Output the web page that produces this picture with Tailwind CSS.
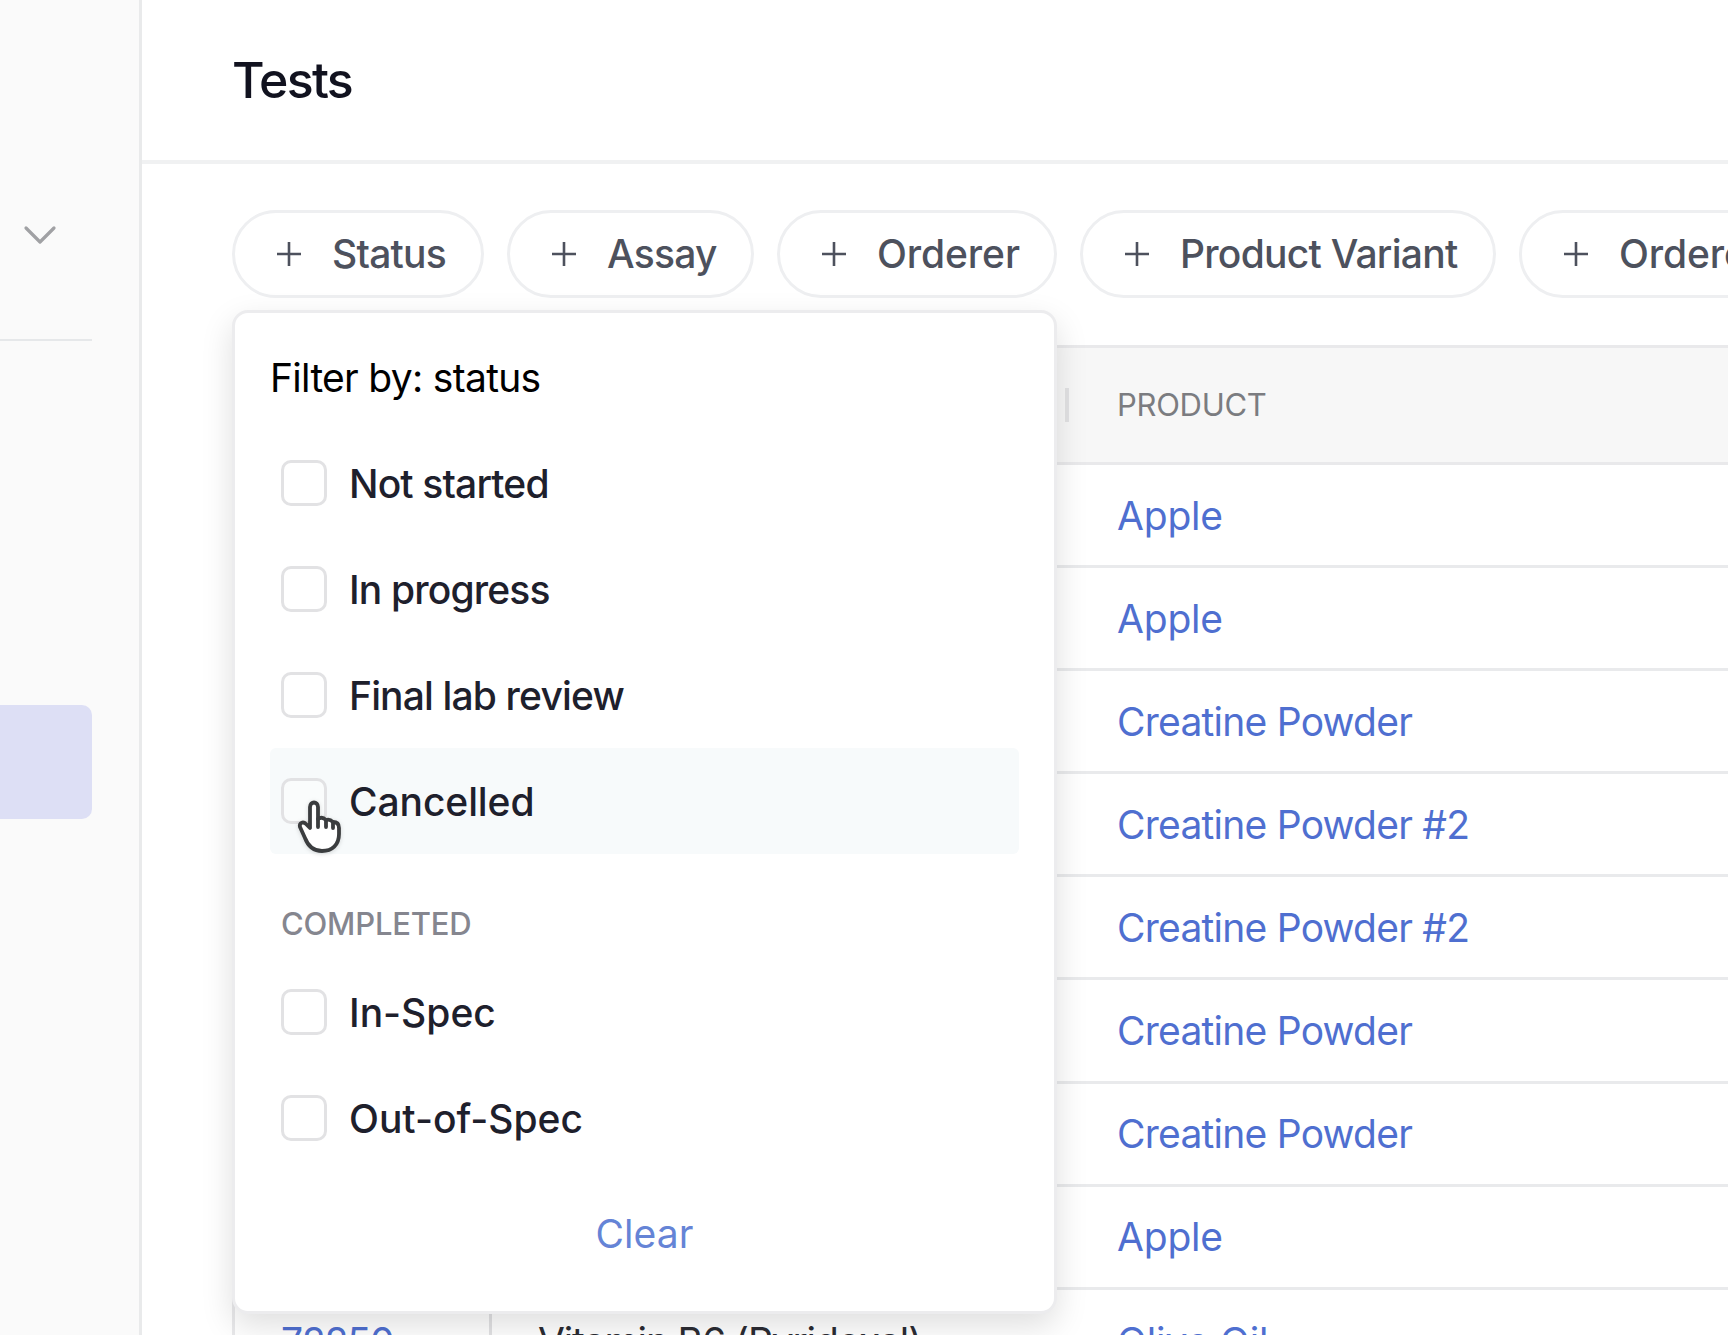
<!DOCTYPE html>
<html lang="en">
<head>
  <meta charset="UTF-8" />
  <meta name="viewport" content="width=device-width, initial-scale=1.0"/>
  <title>Tests</title>
  <script src="https://cdn.jsdelivr.net/npm/@tailwindcss/browser@4"></script>
</head>
<body class="bg-white font-['Inter','Liberation_Sans',sans-serif]">
  <div class="flex w-[1728px] h-[1335px] overflow-hidden">

    <!-- Sidebar -->
    <aside class="w-[142px] shrink-0 bg-[#fafafa] border-r-[3px] border-[#e9eaeb]">
      <div class="h-[341px] w-[92px] border-b-2 border-[#e6e8ea] pt-[225px] pl-[23px]">
        <svg class="w-[34px] h-[20px]" viewBox="0 0 34 20" fill="none" stroke="#a0a1a4" stroke-width="3.2" stroke-linecap="round" stroke-linejoin="round">
          <path d="M3 3l14 14L31 3"/>
        </svg>
      </div>
      <div class="mt-[364px] w-[92px] h-[114px] rounded-r-[10px] bg-[#dddff5]"></div>
    </aside>

    <main class="flex-1 min-w-0">
      <header class="h-[164px] border-b-4 border-[#f0f1f2] pl-[90px] flex items-center">
        <h1 class="text-[50px] leading-none font-medium tracking-[-1.7px] text-[#11121f]">Tests</h1>
      </header>

      <!-- Filter pills -->
      <div class="relative pl-[90px] pt-[46px] h-[181px]">
        <div class="flex gap-[23px] text-[39px] font-medium tracking-[-0.75px] text-[#4d515d] whitespace-nowrap">
          <button class="w-[252px] h-[88px] shrink-0 rounded-full border-[3px] border-[#eeeff1] flex items-center pl-[41px]">
            <svg class="w-[26px] h-[26px] mr-[30px] shrink-0" viewBox="0 0 26 26" stroke="#4d515d" stroke-width="2.6"><path d="M1 13h24M13 1v24"/></svg>
            <span>Status</span>
          </button>
          <button class="w-[247px] h-[88px] shrink-0 rounded-full border-[3px] border-[#eeeff1] flex items-center pl-[41px]">
            <svg class="w-[26px] h-[26px] mr-[30px] shrink-0" viewBox="0 0 26 26" stroke="#4d515d" stroke-width="2.6"><path d="M1 13h24M13 1v24"/></svg>
            <span>Assay</span>
          </button>
          <button class="w-[280px] h-[88px] shrink-0 rounded-full border-[3px] border-[#eeeff1] flex items-center pl-[41px]">
            <svg class="w-[26px] h-[26px] mr-[30px] shrink-0" viewBox="0 0 26 26" stroke="#4d515d" stroke-width="2.6"><path d="M1 13h24M13 1v24"/></svg>
            <span class="tracking-[-0.1px]">Orderer</span>
          </button>
          <button class="w-[416px] h-[88px] shrink-0 rounded-full border-[3px] border-[#eeeff1] flex items-center pl-[41px]">
            <svg class="w-[26px] h-[26px] mr-[30px] shrink-0" viewBox="0 0 26 26" stroke="#4d515d" stroke-width="2.6"><path d="M1 13h24M13 1v24"/></svg>
            <span>Product Variant</span>
          </button>
          <button class="w-[320px] h-[88px] shrink-0 rounded-full border-[3px] border-[#eeeff1] flex items-center pl-[41px]">
            <svg class="w-[26px] h-[26px] mr-[30px] shrink-0" viewBox="0 0 26 26" stroke="#4d515d" stroke-width="2.6"><path d="M1 13h24M13 1v24"/></svg>
            <span class="tracking-[-0.1px]">Ordered</span>
          </button>
        </div>

        <!-- Status dropdown -->
        <div class="absolute z-10 left-[90px] top-[146px] w-[825px] h-[1004px] rounded-[16px] border-[3px] border-[#ececee] bg-white shadow-[0_12px_32px_rgba(0,0,0,0.13)] px-[35px] pt-[34px] text-[39px] leading-none text-[#1e202c] tracking-[-0.85px]">
          <h2 class="h-[66px] pt-[11px] text-black tracking-[-0.7px]">Filter by: status</h2>
          <div class="mt-[17px] font-[450]">
            <label class="h-[106px] flex items-center pl-[11px] gap-[22px]"><span class="size-[46px] rounded-[10px] border-[3px] border-[#e2e2e4] bg-white"></span><span>Not started</span></label>
            <label class="h-[106px] flex items-center pl-[11px] gap-[22px]"><span class="size-[46px] rounded-[10px] border-[3px] border-[#e2e2e4] bg-white"></span><span>In progress</span></label>
            <label class="h-[106px] flex items-center pl-[11px] gap-[22px]"><span class="size-[46px] rounded-[10px] border-[3px] border-[#e2e2e4] bg-white"></span><span>Final lab review</span></label>
            <label class="h-[106px] flex items-center pl-[11px] gap-[22px] rounded-[6px] bg-[#f7fafb]"><span class="size-[46px] rounded-[10px] border-[3px] border-[#e2e2e4] bg-[#fafcfc]"></span><span class="tracking-[-0.1px]">Cancelled</span></label>
          </div>
          <h3 class="mt-[51px] h-[36px] flex items-center pl-[11px] text-[31px] font-medium tracking-[-0.2px] text-[#85868f]">COMPLETED</h3>
          <div class="mt-[18px] font-[450] tracking-[0px]">
            <label class="h-[106px] flex items-center pl-[11px] gap-[22px]"><span class="size-[46px] rounded-[10px] border-[3px] border-[#e2e2e4] bg-white"></span><span>In-Spec</span></label>
            <label class="h-[106px] flex items-center pl-[11px] gap-[22px]"><span class="size-[46px] rounded-[10px] border-[3px] border-[#e2e2e4] bg-white"></span><span>Out-of-Spec</span></label>
          </div>
          <button class="mt-[43px] w-full text-center text-[#6584d6] tracking-[0.1px]">Clear</button>
        </div>
      </div>

      <!-- Tests table -->
      <div class="ml-[90px] border-l-[3px] border-t-[3px] border-[#e9e9eb] text-[39px] tracking-[-0.75px] leading-none text-[#4f6fd0] whitespace-nowrap">
        <div class="h-[117px] flex bg-[#f7f7f7] border-b-[3px] border-[#e9e9eb]">
          <div class="w-[834px] flex items-center justify-end"><span class="w-[4px] h-[34px] bg-[#e2e2e4]"></span></div>
          <div class="flex items-center pl-[48px] pb-[2px] text-[31px] tracking-[-0.3px] text-[#7b7c80]">PRODUCT</div>
        </div>
        <div class="h-[103.1px] flex items-center pl-[882px] border-b-[3px] border-[#e9eaec] tracking-[-0.2px]">Apple</div>
        <div class="h-[103.1px] flex items-center pl-[882px] border-b-[3px] border-[#e9eaec] tracking-[-0.2px]">Apple</div>
        <div class="h-[103.1px] flex items-center pl-[882px] border-b-[3px] border-[#e9eaec]">Creatine Powder</div>
        <div class="h-[103.1px] flex items-center pl-[882px] border-b-[3px] border-[#e9eaec]">Creatine Powder #2</div>
        <div class="h-[103.1px] flex items-center pl-[882px] border-b-[3px] border-[#e9eaec]">Creatine Powder #2</div>
        <div class="h-[103.1px] flex items-center pl-[882px] border-b-[3px] border-[#e9eaec]">Creatine Powder</div>
        <div class="h-[103.1px] flex items-center pl-[882px] border-b-[3px] border-[#e9eaec]">Creatine Powder</div>
        <div class="h-[103.1px] flex items-center pl-[882px] border-b-[3px] border-[#e9eaec] tracking-[-0.2px]">Apple</div>
        <div class="h-[103.1px] flex items-stretch">
          <div class="w-[257px] flex items-center pl-[46px] border-r-[3px] border-[#e2e2e4] tracking-[-1.1px]">72250</div>
          <div class="w-[577px] flex items-center pl-[46px] text-[#2b2c33] tracking-[-1.15px]">Vitamin B6 (Pyridoxal)</div>
          <div class="flex items-center pl-[48px] tracking-[-0.1px]">Olive Oil</div>
        </div>
      </div>
    </main>
  </div>

  <!-- Pointer -->
  <svg class="absolute z-20 left-[296px] top-[797px] w-[48px] h-[60px] drop-shadow-sm" viewBox="0 0 48 60" fill="#fff" stroke="#3b3d3f" stroke-width="3.8" stroke-linejoin="round" stroke-linecap="round">
    <path d="M14 31V10c0-6 8-6 8 0v12c3-2 6-1 8 1 3-1 5 0 7 2 4 0 6 2 6 6v6c0 11-7 17-17 17-9 0-14-5-17-13L4 30c-1-4 3-6 6-3z"/>
    <path d="M22 22v8M30 23v7M37 25v6"/>
  </svg>
</body>
</html>
